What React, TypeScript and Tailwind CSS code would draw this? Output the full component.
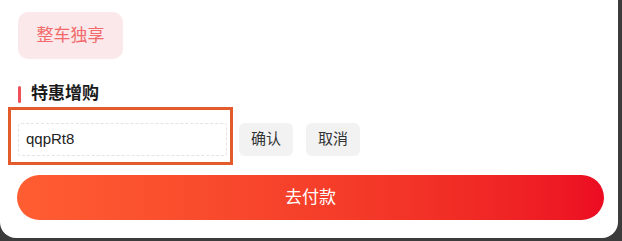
export default function App() {
  return (
    <div className="h-[241px] w-[622px] overflow-hidden bg-[#3c3c3c] font-['Liberation_Sans','Noto_Sans_CJK_SC',sans-serif]">
      <div className="h-[238px] w-[618px] rounded-b-[16px] bg-white pt-[12px]">
        <div className="ml-[18px] flex h-[47px] w-[105px] items-center justify-center rounded-[10px] bg-[#fbe8ea] text-[17px] text-[#f26a6a]">
          整车独享
        </div>
        <div className="ml-[18px] mt-[26px] flex h-[18px] items-center">
          <span className="h-[17px] w-[3px] rounded-full bg-[#ef4f58]" />
          <span className="ml-[10px] text-[17px] font-bold text-[#1a1a1a]">特惠增购</span>
        </div>
        <div className="mt-[4px] flex items-start">
          <div className="ml-[8px] h-[58px] w-[225px] border-[3px] border-[#e35a2b] pl-[7px] pr-[3px] pt-[13px]">
            <div className="flex h-[33px] items-center rounded-[3px] border border-dashed border-[#e4e4e4] pl-[7px] text-[15px] text-[#222]">
              qqpRt8
            </div>
          </div>
          <button className="ml-[6px] mt-[16px] h-[33px] w-[54px] rounded-[6px] bg-[#f2f2f2] text-[15px] text-[#333]">
            确认
          </button>
          <button className="ml-[13px] mt-[16px] h-[33px] w-[54px] rounded-[6px] bg-[#f2f2f2] text-[15px] text-[#333]">
            取消
          </button>
        </div>
        <button className="ml-[17px] mt-[10px] flex h-[45px] w-[587px] items-center justify-center rounded-full bg-gradient-to-r from-[#ff5d32] to-[#ec0b22] text-[17px] text-white">
          去付款
        </button>
      </div>
    </div>
  );
}
